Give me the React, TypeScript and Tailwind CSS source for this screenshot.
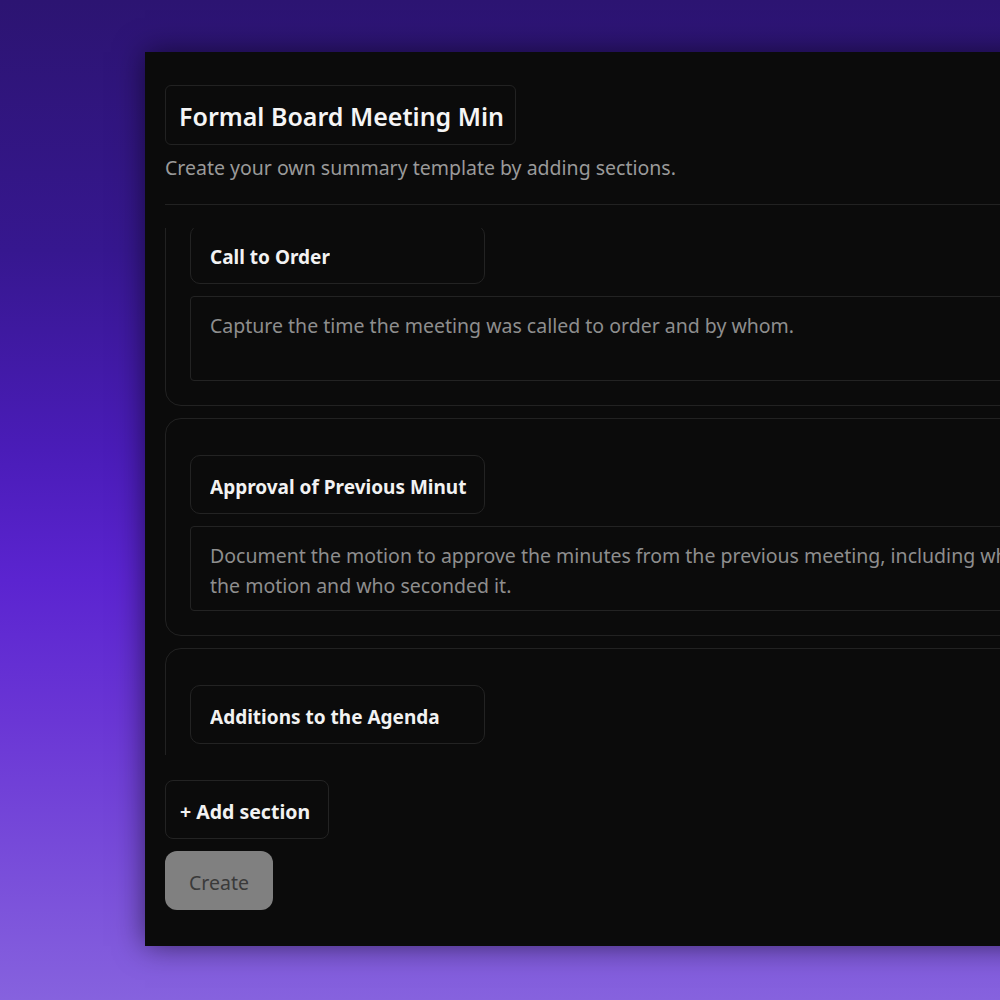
import React from "react";

/**
 * Custom summary template editor, shown in a dark modal over a purple backdrop.
 */

interface Section {
  title: string;
  body: string;
}

const sections: Section[] = [
  { title: "Call to Order", body: "Capture the time the meeting was called to order and by whom." },
  {
    title: "Approval of Previous Minutes",
    body: "Document the motion to approve the minutes from the previous meeting, including who made\nthe motion and who seconded it.",
  },
  { title: "Additions to the Agenda", body: "Note any items added to the agenda at the start of the meeting." },
];

function SectionCard({ section }: { section: Section }) {
  return (
    <div className="rounded-[16px] border border-[#222222] pl-[24px] pt-[36px] pb-[24px] w-[1000px]">
      {/* Section title input */}
      <div className="w-[295px] h-[59px] rounded-[10px] border border-[#232323] pl-[19px] pr-[17px] flex items-center overflow-hidden">
        <span className="block overflow-hidden whitespace-nowrap text-[19px] font-bold text-[#f2f2f2] pt-[5px]">
          {section.title}
        </span>
      </div>
      {/* Description textarea */}
      <div className="mt-[12px] h-[85px] rounded-[4px] border border-[#232323] pl-[19px] pt-[14px] text-[19.5px] leading-[30px] text-[#8e8e8e] whitespace-pre-line">
        {section.body}
      </div>
    </div>
  );
}

export default function App() {
  return (
    <div
      className="w-[1000px] h-[1000px] overflow-hidden bg-[linear-gradient(to_bottom,#2c1472_0%,#36178f_25%,#4a1cb8_45%,#5b24d0_58%,#6a36d5_72%,#8662de_100%)] pt-[52px] pl-[145px]"
      style={{ fontFamily: '"Noto Sans", "Open Sans", sans-serif' }}
    >
      <div className="w-[900px] h-[894px] bg-[#0b0b0b] shadow-[0_0_28px_rgba(0,0,0,0.55)] pl-[20px] pt-[33px] flex flex-col">
        {/* Template name */}
        <div className="w-[351px] h-[60px] rounded-[6px] border border-[#222222] pl-[13px] pr-[12px] flex items-center">
          <span className="block overflow-hidden whitespace-nowrap text-[25px] font-semibold text-[#f5f5f5] pt-[4px]">
            Formal Board Meeting Minutes
          </span>
        </div>
        <p className="mt-[8px] text-[19.5px] leading-[28px] text-[#9a9a9a] pt-[1px]">
          Create your own summary template by adding sections.
        </p>
        <div className="mt-[22px] h-px bg-[#222222]" />

        {/* Scrolled section list */}
        <div className="mt-[23px] h-[527px] overflow-hidden">
          <div className="-mt-[40px] flex flex-col gap-[12px]">
            {sections.map((s) => (
              <SectionCard key={s.title} section={s} />
            ))}
          </div>
        </div>

        <div className="mt-[25px] flex flex-col items-start gap-[12px]">
          <button className="h-[59px] w-[164px] pl-[14px] pt-[5px] text-left rounded-[8px] border border-[#232323] text-[19.5px] font-bold text-[#f2f2f2]">
            + Add section
          </button>
          <button className="h-[59px] w-[108px] pt-[5px] rounded-[12px] bg-[#808080] text-[19.5px] text-[#3a3a3a]">
            Create
          </button>
        </div>
      </div>
    </div>
  );
}
